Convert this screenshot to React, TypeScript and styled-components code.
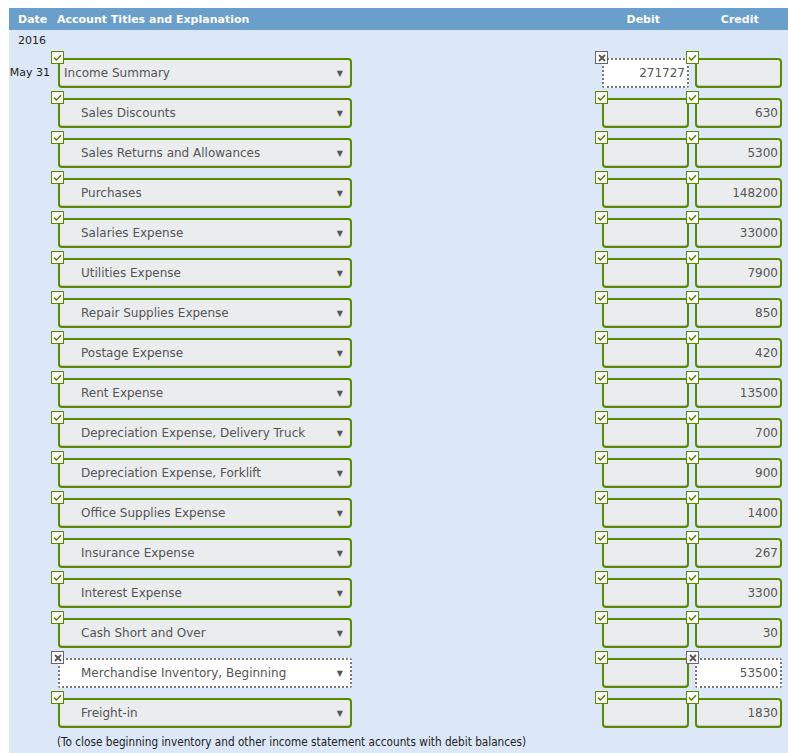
import styled, { createGlobalStyle } from "styled-components";

const GlobalStyle = createGlobalStyle`
    body {
        margin: 0;
        background: #ffffff;
        font-family: "DejaVu Sans", Verdana, sans-serif;
    }
`;

const Page = styled.div`
    padding: 8px 0 0 9px;
`;

const Sheet = styled.div`
    background: #dce8f7;
    min-height: 745px;
`;

const Header = styled.div`
    display: grid;
    grid-template-columns: 48px 538px 1fr 1fr;
    height: 22px;
    align-items: center;
    background: #6a9ecb;
    color: #ffffff;
    font-size: 11px;
    font-weight: bold;
`;

const HeadCell = styled.div<{ $center?: boolean; $pad?: number }>`
    padding-left: ${(p) => p.$pad ?? 0}px;
    text-align: ${(p) => (p.$center ? "center" : "left")};
`;

const YearRow = styled.div`
    height: 21px;
    line-height: 21px;
    padding-left: 9px;
    font-size: 11px;
    color: #222;
`;

const Row = styled.div`
    display: grid;
    grid-template-columns: 42px 544px 91px 1fr;
    height: 40px;
`;

const DateCell = styled.div`
    padding-top: 7px;
    height: 30px;
    line-height: 30px;
    text-align: right;
    padding-right: 1px;
    font-size: 11px;
    color: #222;
`;

const Cell = styled.div<{ $inset?: number }>`
    position: relative;
    padding: 7px 0 0 ${(p) => p.$inset ?? 7}px;
`;

const Badge = styled.span<{ $ok: boolean }>`
    position: absolute;
    top: 0;
    left: 0;
    width: 13px;
    height: 13px;
    box-sizing: border-box;
    border: 1px solid ${(p) => (p.$ok ? "#5a8a00" : "#666")};
    background: #ffffff;
    display: flex;
    align-items: center;
    justify-content: center;
    z-index: 2;
`;

const Field = styled.div<{ $ok: boolean; $w: number }>`
    width: ${(p) => p.$w}px;
    height: 30px;
    box-sizing: border-box;
    border: 2px ${(p) => (p.$ok ? "solid #5a8a00" : "dotted #777")};
    border-radius: ${(p) => (p.$ok ? "4px" : "2px")};
    background: ${(p) => (p.$ok ? "#ebecee" : "#ffffff")};
    box-shadow: ${(p) => (p.$ok ? "inset 0 -1px 0 #c9c9c9" : "none")};
    display: flex;
    align-items: center;
    font-size: 12px;
    color: #555;
`;

const SelectText = styled.span<{ $indent: boolean }>`
    flex: 1;
    padding-left: ${(p) => (p.$indent ? "21px" : "4px")};
    white-space: nowrap;
`;

const Arrow = styled.span`
    font-size: 8px;
    color: #555;
    padding-right: 7px;
`;

const Amount = styled.span`
    flex: 1;
    text-align: right;
    padding-right: 2px;
`;

const Note = styled.div`
    padding: 4px 0 0 48px;
    font-family: "DejaVu Sans Condensed", "DejaVu Sans", sans-serif;
    font-size: 11.7px;
    color: #222;
`;

const Check = () => (
    <svg width="9" height="7" viewBox="0 0 9 7">
        <path d="M1 3.6 L3.4 6 L8 1.2" fill="none" stroke="#5a8a00" strokeWidth="1.6" />
    </svg>
);

const Cross = () => (
    <svg width="8" height="8" viewBox="0 0 8 8">
        <path d="M1 1 L7 7 M7 1 L1 7" stroke="#555" strokeWidth="1.8" />
    </svg>
);

type Line = {
    account: string;
    debit?: string;
    credit?: string;
    accountOk?: boolean;
    debitOk?: boolean;
    creditOk?: boolean;
};

const lines: Line[] = [
    { account: "Income Summary", debit: "271727", debitOk: false },
    { account: "Sales Discounts", credit: "630" },
    { account: "Sales Returns and Allowances", credit: "5300" },
    { account: "Purchases", credit: "148200" },
    { account: "Salaries Expense", credit: "33000" },
    { account: "Utilities Expense", credit: "7900" },
    { account: "Repair Supplies Expense", credit: "850" },
    { account: "Postage Expense", credit: "420" },
    { account: "Rent Expense", credit: "13500" },
    { account: "Depreciation Expense, Delivery Truck", credit: "700" },
    { account: "Depreciation Expense, Forklift", credit: "900" },
    { account: "Office Supplies Expense", credit: "1400" },
    { account: "Insurance Expense", credit: "267" },
    { account: "Interest Expense", credit: "3300" },
    { account: "Cash Short and Over", credit: "30" },
    {
        account: "Merchandise Inventory, Beginning",
        credit: "53500",
        accountOk: false,
        creditOk: false,
    },
    { account: "Freight-in", credit: "1830" },
];

const Mark = ({ ok }: { ok: boolean }) => (
    <Badge $ok={ok}>{ok ? <Check /> : <Cross />}</Badge>
);

const App = () => {
    return (
        <Page>
            <GlobalStyle />
            <Sheet>
                <Header>
                    <HeadCell $pad={9}>Date</HeadCell>
                    <HeadCell>Account Titles and Explanation</HeadCell>
                    <HeadCell $center>Debit</HeadCell>
                    <HeadCell $center>Credit</HeadCell>
                </Header>
                <YearRow>2016</YearRow>
                {lines.map((l, i) => {
                    const accOk = l.accountOk ?? true;
                    const debOk = l.debitOk ?? true;
                    const credOk = l.creditOk ?? true;
                    return (
                        <Row key={l.account}>
                            <DateCell>{i === 0 ? "May 31" : ""}</DateCell>
                            <Cell>
                                <Mark ok={accOk} />
                                <Field $ok={accOk} $w={294}>
                                    <SelectText $indent={i !== 0}>{l.account}</SelectText>
                                    <Arrow>▼</Arrow>
                                </Field>
                            </Cell>
                            <Cell>
                                <Mark ok={debOk} />
                                <Field $ok={debOk} $w={87}>
                                    <Amount>{l.debit}</Amount>
                                </Field>
                            </Cell>
                            <Cell $inset={9}>
                                <Mark ok={credOk} />
                                <Field $ok={credOk} $w={87}>
                                    <Amount>{l.credit}</Amount>
                                </Field>
                            </Cell>
                        </Row>
                    );
                })}
                <Note>(To close beginning inventory and other income statement accounts with debit balances)</Note>
            </Sheet>
        </Page>
    );
};

export default App;
